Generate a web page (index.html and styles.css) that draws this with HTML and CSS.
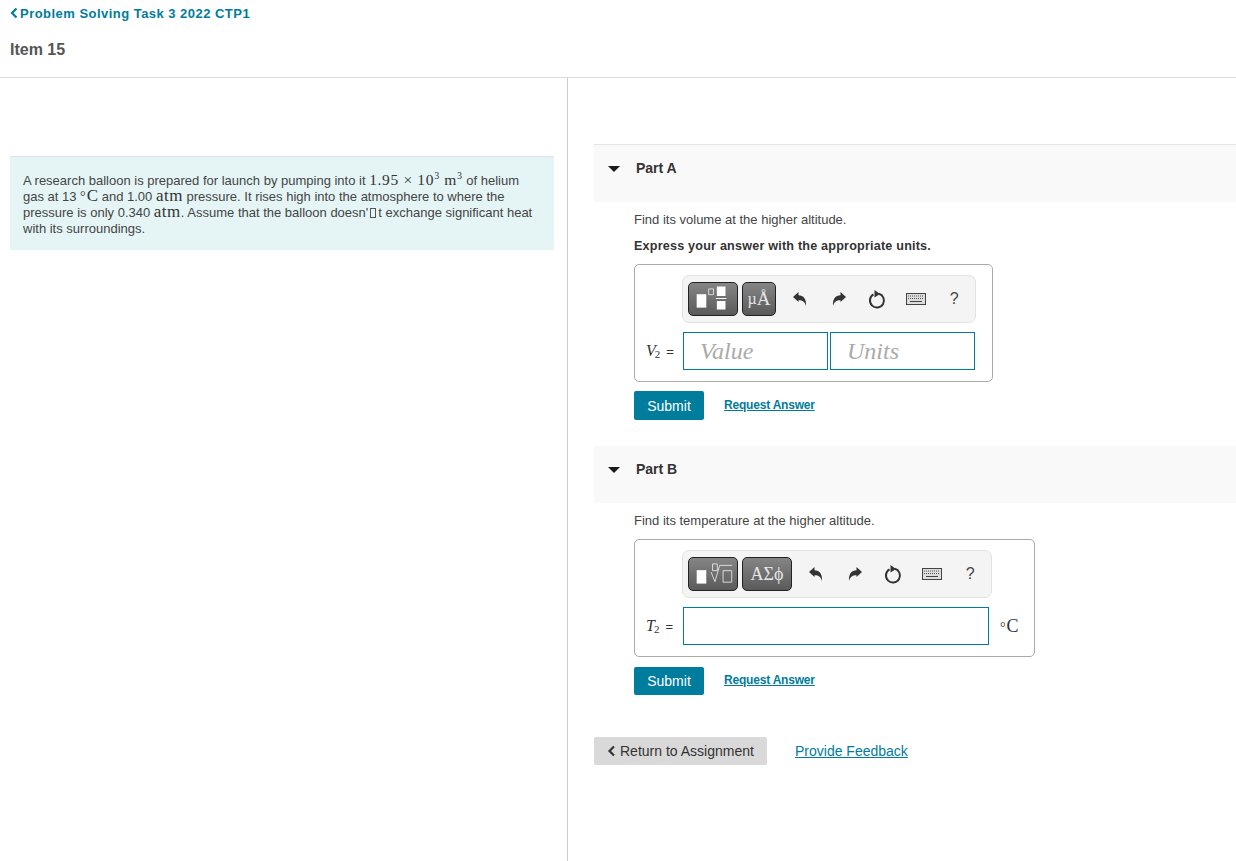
FILE: index.html
```html
<!DOCTYPE html>
<html lang="en">
<head>
<meta charset="utf-8">
<title>Item 15</title>
<link rel="stylesheet" href="styles.css">
</head>
<body>
<header class="top">
  <a class="crumb" href="#"><svg class="crumb-icon" viewBox="0 0 8 12" width="8" height="12"><path d="M6.500 1.500 2 6l4.500 4.500" fill="none" stroke="#007c9c" stroke-width="2.200"/></svg>Problem Solving Task 3 2022 CTP1</a>
  <h1 class="item-title">Item 15</h1>
</header>
<main class="split">
  <section class="left">
    <div class="intro">A research balloon is prepared for launch by pumping into it <span class="math">1.95 × 10<sup>3</sup> m<sup>3</sup></span> of helium gas at 13 <span class="math celsius"><span class="deg">°</span>C</span> and 1.00 <span class="math wide">atm</span> pressure. It rises high into the atmosphere to where the pressure is only 0.340 <span class="math wide">atm</span>. Assume that the balloon doesn'<span class="missing"></span>t exchange significant heat with its surroundings.</div>
  </section>
  <section class="right">
    <div class="part-head part-a"><svg class="caret" viewBox="0 0 12 6" width="12" height="6"><path d="M0 0h12L6 6z" fill="#1a1a1a"/></svg><h2 class="part-title">Part A</h2></div>
    <div class="part-body">
      <p class="q">Find its volume at the higher altitude.</p>
      <p class="q strong">Express your answer with the appropriate units.</p>
      <div class="answer answer-a">
        <div class="toolbar">
          <button class="tool tool-wide">
            <svg viewBox="0 0 50 34" width="50" height="34"><path d="M8 12h10v14H8z" fill="#fff"/><path d="M20.500 6.500h5v6h-5z" fill="none" stroke="#ddd"/><path d="M29 4h9v10h-9zM29 19h9v9h-9z" fill="#fff"/><path d="M28 16.500h11" stroke="#fff"/></svg>
          </button>
          <button class="tool tool-narrow"><span class="mu">µ</span><span class="ang">Å</span></button>
          <div class="actions">
            <svg class="act" viewBox="0 0 16 16" width="16" height="16"><path d="M1 6 6.500 1v3.200c5 .3 8 3.300 7.500 10.800-1-4-3-5.800-7.500-5.800V11z" fill="#333"/></svg>
            <svg class="act" viewBox="0 0 16 16" width="16" height="16"><path d="M15 6 9.500 1v3.200c-5 .3-8 3.300-7.500 10.800 1-4 3-5.800 7.500-5.800V11z" fill="#333"/></svg>
            <svg class="act" viewBox="0 0 18 20" width="18" height="20"><path d="M11 4.800a7 7 0 1 1-5.500.6" fill="none" stroke="#333" stroke-width="2"/><path d="M6.500 1 12 5 6.500 8.500z" fill="#333"/></svg>
            <svg class="act" viewBox="0 0 20 12" width="20" height="12"><rect x=".5" y=".5" width="19" height="11" fill="#ddd" stroke="#444"/><path d="M2 3h16M2 5.500h16" stroke="#555" stroke-dasharray="1 1"/><path d="M4 8.500h12" stroke="#444"/></svg>
            <span class="help">?</span>
          </div>
        </div>
        <div class="entry">
          <span class="var"><i>V</i><sub>2</sub> <span class="eq">=</span></span>
          <div class="field field-value">Value</div>
          <div class="field field-units">Units</div>
        </div>
      </div>
      <div class="submit-row"><button class="submit">Submit</button><a class="request" href="#">Request Answer</a></div>
    </div>
    <div class="part-head part-b"><svg class="caret" viewBox="0 0 12 6" width="12" height="6"><path d="M0 0h12L6 6z" fill="#1a1a1a"/></svg><h2 class="part-title">Part B</h2></div>
    <div class="part-body">
      <p class="q">Find its temperature at the higher altitude.</p>
      <div class="answer answer-b">
        <div class="toolbar">
          <button class="tool tool-wide">
            <svg viewBox="0 0 50 34" width="50" height="34"><path d="M8 13h10v14H8z" fill="#fff"/><path d="M24.500 6.500h5v7h-5z" fill="none" stroke="#ddd"/><path d="M23 15l4 10 5-17h13" fill="none" stroke="#ddd"/><path d="M35.500 13.500h9v12h-9z" fill="none" stroke="#ddd"/></svg>
          </button>
          <button class="tool tool-greek">ΑΣϕ</button>
          <div class="actions">
            <svg class="act" viewBox="0 0 16 16" width="16" height="16"><path d="M1 6 6.500 1v3.200c5 .3 8 3.300 7.500 10.800-1-4-3-5.800-7.500-5.800V11z" fill="#333"/></svg>
            <svg class="act" viewBox="0 0 16 16" width="16" height="16"><path d="M15 6 9.500 1v3.200c-5 .3-8 3.300-7.500 10.800 1-4 3-5.800 7.500-5.800V11z" fill="#333"/></svg>
            <svg class="act" viewBox="0 0 18 20" width="18" height="20"><path d="M11 4.800a7 7 0 1 1-5.500.6" fill="none" stroke="#333" stroke-width="2"/><path d="M6.500 1 12 5 6.500 8.500z" fill="#333"/></svg>
            <svg class="act" viewBox="0 0 20 12" width="20" height="12"><rect x=".5" y=".5" width="19" height="11" fill="#ddd" stroke="#444"/><path d="M2 3h16M2 5.500h16" stroke="#555" stroke-dasharray="1 1"/><path d="M4 8.500h12" stroke="#444"/></svg>
            <span class="help">?</span>
          </div>
        </div>
        <div class="entry">
          <span class="var"><i>T</i><sub>2</sub> <span class="eq">=</span></span>
          <div class="field field-temp"></div>
          <span class="unit"><span class="deg">°</span>C</span>
        </div>
      </div>
      <div class="submit-row submit-row-b"><button class="submit">Submit</button><a class="request" href="#">Request Answer</a></div>
    </div>
    <div class="footer-row">
      <a class="return" href="#"><svg viewBox="0 0 9 12" width="9" height="12"><path d="M7 1.500 2.500 6 7 10.500" fill="none" stroke="#333" stroke-width="2.200"/></svg>Return to Assignment</a>
      <a class="feedback" href="#">Provide Feedback</a>
    </div>
  </section>
</main>
</body>
</html>
```
FILE: styles.css
```css
* { box-sizing: border-box; }
html, body { margin: 0; height: 100%; }
body { font-family: "Liberation Sans", Arial, sans-serif; color: #333; background: #fff; overflow: hidden; }
.top { height: 78px; border-bottom: 1px solid #ddd; padding: 5px 10px 0; }
.crumb { display: flex; align-items: center; gap: 2px; height: 16px; font-size: 13px; font-weight: 700; letter-spacing: .47px; color: #007c9c; text-decoration: none; }
.crumb-icon { flex: none; }
.item-title { margin: 20px 0 0; font-size: 16px; line-height: 18px; font-weight: 700; color: #555; }
.split { display: flex; height: 783px; }
.left { width: 568px; flex: none; border-right: 1px solid #c8ccd0; padding: 78px 13px 0 10px; }
.intro { background: #e5f5f6; border-top: 1px solid #dde3e6; height: 94px; padding: 16px 18px 0 13px; font-size: 13px; line-height: 16px; color: #444; }
.math { font-family: "Liberation Serif", serif; font-size: 15.500px; line-height: 0; letter-spacing: .65px; color: #333; }
.math.wide { font-size: 17px; letter-spacing: .5px; }
.math.celsius { font-size: 17px; letter-spacing: 0; }
.deg { font-size: 14px; line-height: 0; margin-right: 1px; }
.math sup { font-size: 10px; line-height: 0; }
.missing { display: inline-block; width: 6px; height: 10px; border: 1px solid #555; vertical-align: -1px; margin: 0 2px; }
.right { flex: 1; padding: 66px 0 0 26px; }
.part-head { display: flex; align-items: flex-start; background: #f9f9f9; padding: 14px 14px 0; }
.part-a { height: 58px; border-top: 1px solid #e5e5e5; }
.part-b { height: 57px; margin-top: 26px; }
.caret { margin: 7px 16px 0 0; flex: none; }
.part-title { margin: 0; font-size: 14px; line-height: 18px; font-weight: 700; color: #333; }
.part-body { padding: 10px 0 0 40px; }
.q { margin: 0 0 10px; font-size: 13px; line-height: 16px; color: #444; }
.q.strong { font-size: 12.600px; font-weight: 700; color: #333; letter-spacing: .2px; margin-bottom: 10px; }
.answer { border: 1px solid #aaa; border-radius: 5px; height: 118px; padding: 10px 0 0 47px; }
.answer-a { width: 359px; }
.answer-b { width: 401px; }
.toolbar { display: flex; align-items: center; gap: 4px; height: 48px; background: #f4f4f4; border: 1px solid #e2e2e2; border-radius: 7px; padding: 0 0 0 5px; }
.answer-a .toolbar { width: 294px; }
.answer-b .toolbar { width: 310px; }
.tool { flex: none; height: 34px; padding: 0; border: 1px solid #222; border-radius: 5px; background: linear-gradient(#858585, #5a5a5a); color: #e6e6e6; font-family: "Liberation Serif", serif; font-size: 18px; display: flex; align-items: center; justify-content: center; }
.tool svg { display: block; }
.tool-wide { width: 50px; }
.tool-narrow { width: 34px; }
.tool-greek { width: 50px; }
.mu { font-size: 16px; }
.ang { font-size: 19px; }
.actions { flex: none; display: grid; grid-template-columns: repeat(5, 38.500px); justify-items: center; align-items: center; padding-left: 1px; }
.help { font-size: 16px; color: #444; }
.entry { display: flex; align-items: center; margin: 9px 0 0 1px; height: 38px; }
.var { position: absolute; margin-left: -37px; font-family: "Liberation Serif", serif; font-size: 16px; color: #333; }
.var sub { font-size: 11px; line-height: 0; vertical-align: -2px; margin-left: -1px; }
.eq { font-family: "Liberation Sans", sans-serif; font-size: 13px; margin-left: 2px; }
.field { height: 38px; border: 1px solid #007c9c; background: #fff; font-family: "Liberation Serif", serif; font-style: italic; font-size: 24px; color: #aaa; padding-left: 16px; line-height: 36px; }
.field-value { width: 145px; margin-right: 2px; }
.field-units { width: 145px; }
.field-temp { width: 306px; }
.unit { margin-left: 11px; font-family: "Liberation Serif", serif; font-size: 18px; color: #333; }
.submit-row { display: flex; align-items: center; gap: 20px; margin-top: 9px; }
.submit-row-b { margin-top: 10px; }
.submit { width: 70px; height: 29px; padding: 0; border: 0; border-radius: 2px; background: #007c9c; color: #fff; font: 14px "Liberation Sans", sans-serif; }
.submit-row-b .submit { height: 28px; }
.request { font-size: 12px; font-weight: 700; letter-spacing: -.2px; color: #007c9c; text-decoration: underline; position: relative; top: -1px; }
.footer-row { display: flex; align-items: center; margin-top: 42px; gap: 28px; }
.return { display: flex; align-items: center; gap: 4px; width: 173px; height: 28px; padding-left: 13px; background: #d9d9d9; border-radius: 2px; color: #333; font-size: 14px; text-decoration: none; }
.feedback { font-size: 14px; color: #007c9c; text-decoration: underline; }
```
